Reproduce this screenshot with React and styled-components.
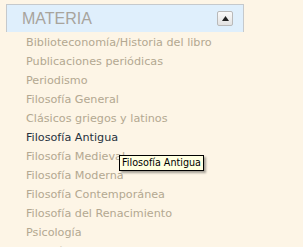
import React from "react";
import styled, { createGlobalStyle } from "styled-components";

const GlobalStyle = createGlobalStyle`
  html, body {
    margin: 0;
    padding: 0;
    background: #fdf5e6;
    height: 100%;
    overflow: hidden;
  }
`;

const Page = styled.div`
  position: relative;
  padding: 4px 0 0 6px;
  width: 303px;
  height: 247px;
  box-sizing: border-box;
  overflow: hidden;
`;

const Header = styled.div`
  display: flex;
  align-items: center;
  justify-content: space-between;
  width: 238px;
  height: 28px;
  box-sizing: border-box;
  background: #dfeffc;
  border: 1px solid #c5c9cc;
  border-bottom: none;
  padding: 0 10px 0 15px;
`;

const HeaderTitle = styled.span`
  font-family: "Liberation Sans", Arial, sans-serif;
  font-size: 16px;
  color: #a8a49c;
`;

const ToggleButton = styled.button`
  width: 16px;
  height: 15px;
  padding: 0;
  border: 1px solid #b9b9b9;
  border-radius: 2px;
  background: linear-gradient(#fafafa, #e2e2e2);
  display: flex;
  align-items: center;
  justify-content: center;
`;

const List = styled.ul`
  list-style: none;
  margin: 0;
  padding: 1px 0 0 20px;
`;

const Item = styled.li`
  font-family: "DejaVu Sans", Verdana, sans-serif;
  font-size: 11.2px;
  line-height: 19px;
  color: ${(p) => (p.$active ? "#27323d" : "#b3a891")};
  white-space: nowrap;
`;

const Tooltip = styled.div`
  position: absolute;
  left: 119px;
  top: 155px;
  padding: 0 2px;
  height: 16px;
  line-height: 14px;
  box-sizing: border-box;
  background: #ffffe1;
  border: 1px solid #000;
  font-family: "DejaVu Sans", Tahoma, sans-serif;
  font-size: 9.6px;
  color: #000;
  box-shadow: 2px 2px 2px rgba(0, 0, 0, 0.35);
  white-space: nowrap;
`;

const items = [
  "Biblioteconomía/Historia del libro",
  "Publicaciones periódicas",
  "Periodismo",
  "Filosofía General",
  "Clásicos griegos y latinos",
  "Filosofía Antigua",
  "Filosofía Medieval",
  "Filosofía Moderna",
  "Filosofía Contemporánea",
  "Filosofía del Renacimiento",
  "Psicología",
  "Religión",
];

export default function App() {
  return (
    <Page>
      <GlobalStyle />
      <Header>
        <HeaderTitle>MATERIA</HeaderTitle>
        <ToggleButton>
          <svg width="7" height="5" viewBox="0 0 7 5">
            <path d="M3.5 0 L7 5 L0 5 Z" fill="#222" />
          </svg>
        </ToggleButton>
      </Header>
      <List>
        {items.map((t) => (
          <Item key={t} $active={t === "Filosofía Antigua"}>
            {t}
          </Item>
        ))}
      </List>
      <Tooltip>Filosofía Antigua</Tooltip>
    </Page>
  );
}
